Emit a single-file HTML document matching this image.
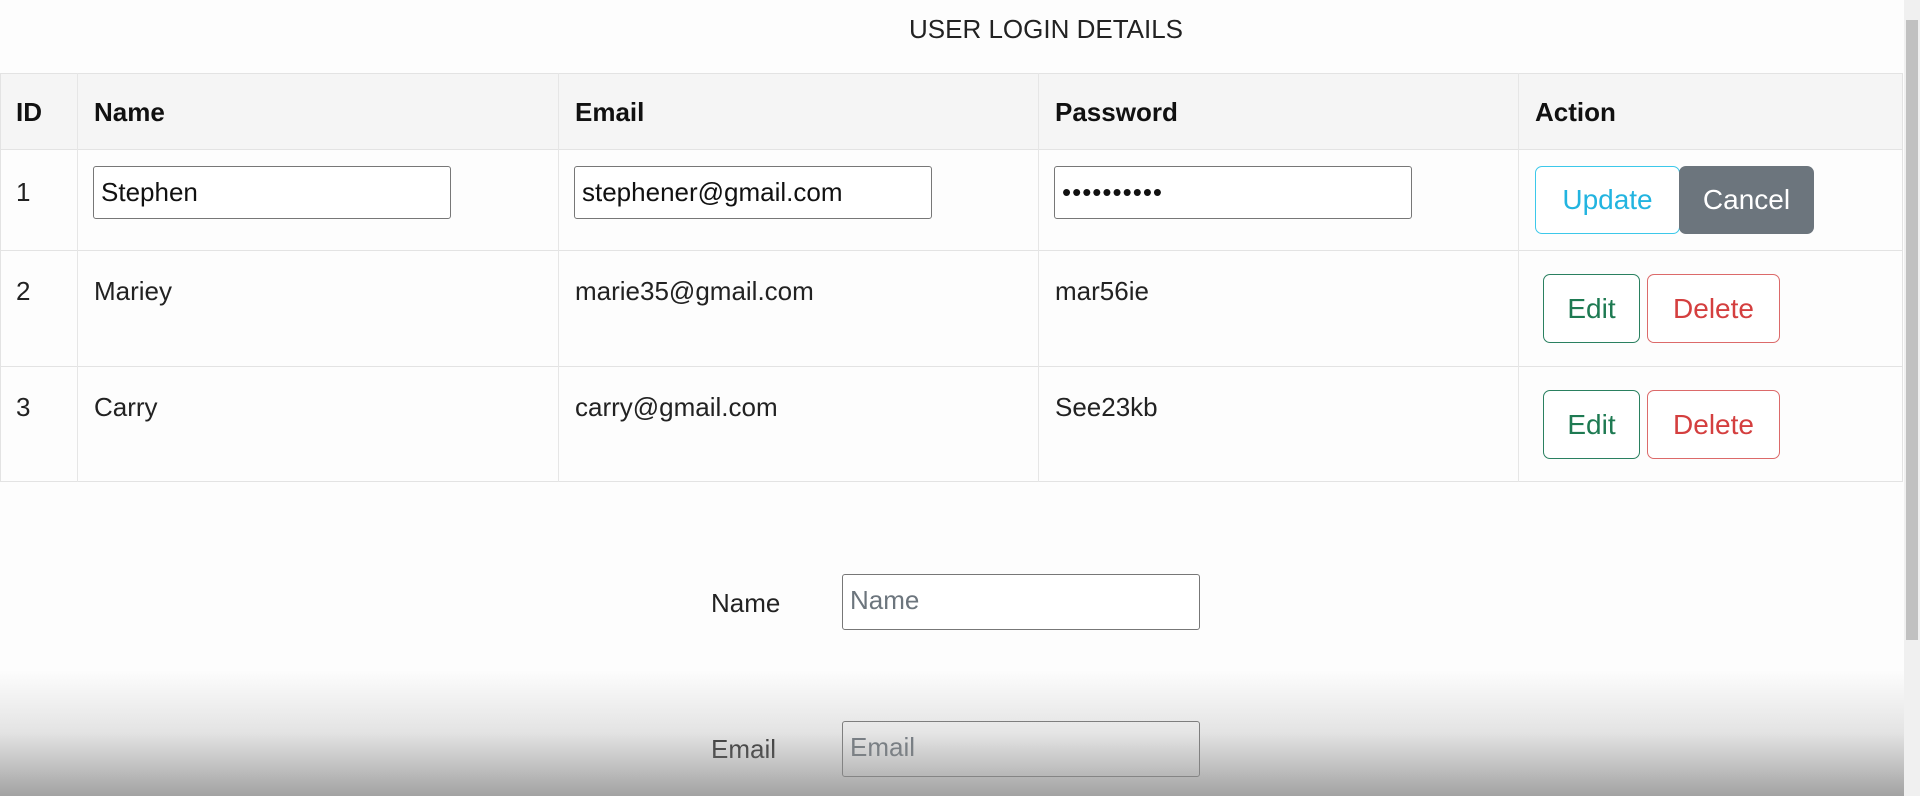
<!DOCTYPE html>
<html><head><style>
body{margin:0;width:1920px;height:796px;overflow:hidden;background:#fdfdfd;font-family:"Liberation Sans",sans-serif;color:#212529;position:relative}
.a{position:absolute}
.title{left:906px;width:280px;top:14px;text-align:center;font-size:26px;color:#222}
.tbl{left:0;top:73px;width:1903px;height:409px;border:1px solid #e3e3e3;box-sizing:border-box}
.hdr{left:0;top:73px;width:1903px;height:76px;background:#f5f5f5}
.hl{height:1px;background:#e3e3e3;left:0;width:1903px}
.vl{width:1px;background:#e6e6e6;top:73px;height:409px}
.th{font-weight:bold;font-size:26px;top:97px;color:#111}
.td{font-size:26px;color:#222}
.inp{border:1px solid #777;border-radius:3px;background:#fff;height:53px;box-sizing:border-box;font-size:26px;padding:10px 7px;color:#111}
.btn{border-radius:7px;box-sizing:border-box;font-size:28px;text-align:center;background:#fff}
.sb{left:1904px;top:0;width:16px;height:796px;background:#f0f0f0}
.sbt{left:1906px;top:20px;width:12px;height:620px;background:#c1c1c1}
.shade{left:0;top:670px;width:1920px;height:126px;background:linear-gradient(to bottom,rgba(150,150,150,0),rgba(150,150,150,.25) 50%,rgba(140,140,140,.8))}
</style></head><body>
<div class="a title">USER LOGIN DETAILS</div>
<div class="a hdr"></div>
<div class="a tbl"></div>
<div class="a hl" style="top:149px"></div>
<div class="a hl" style="top:250px"></div>
<div class="a hl" style="top:366px"></div>
<div class="a vl" style="left:77px"></div>
<div class="a vl" style="left:558px"></div>
<div class="a vl" style="left:1038px"></div>
<div class="a vl" style="left:1518px"></div>
<div class="a th" style="left:16px">ID</div>
<div class="a th" style="left:94px">Name</div>
<div class="a th" style="left:575px">Email</div>
<div class="a th" style="left:1055px">Password</div>
<div class="a th" style="left:1535px">Action</div>
<div class="a td" style="left:16px;top:177px">1</div>
<div class="a inp" style="left:93px;top:166px;width:358px">Stephen</div>
<div class="a inp" style="left:574px;top:166px;width:358px">stephener@gmail.com</div>
<div class="a inp" style="left:1054px;top:166px;width:358px;letter-spacing:1px">••••••••••</div>
<div class="a btn" style="left:1535px;top:166px;width:145px;height:68px;border:1px solid #3cc8ea;color:#22b4e0;line-height:66px">Update</div>
<div class="a btn" style="left:1679px;top:166px;width:135px;height:68px;background:#6c757d;color:#fff;line-height:68px">Cancel</div>
<div class="a td" style="left:16px;top:276px">2</div>
<div class="a td" style="left:94px;top:276px">Mariey</div>
<div class="a td" style="left:575px;top:276px">marie35@gmail.com</div>
<div class="a td" style="left:1055px;top:276px">mar56ie</div>
<div class="a btn" style="left:1543px;top:274px;width:97px;height:69px;border:1px solid #2a8060;color:#1e7a52;line-height:67px">Edit</div>
<div class="a btn" style="left:1647px;top:274px;width:133px;height:69px;border:1px solid #dc6a6a;color:#d43f3f;line-height:67px">Delete</div>
<div class="a td" style="left:16px;top:392px">3</div>
<div class="a td" style="left:94px;top:392px">Carry</div>
<div class="a td" style="left:575px;top:392px">carry@gmail.com</div>
<div class="a td" style="left:1055px;top:392px">See23kb</div>
<div class="a btn" style="left:1543px;top:390px;width:97px;height:69px;border:1px solid #2a8060;color:#1e7a52;line-height:67px">Edit</div>
<div class="a btn" style="left:1647px;top:390px;width:133px;height:69px;border:1px solid #dc6a6a;color:#d43f3f;line-height:67px">Delete</div>
<div class="a td" style="left:711px;top:588px">Name</div>
<div class="a inp" style="left:842px;top:574px;width:358px;height:56px;color:#6c757d">Name</div>
<div class="a td" style="left:711px;top:734px">Email</div>
<div class="a inp" style="left:842px;top:721px;width:358px;height:56px;color:#6c757d">Email</div>
<div class="a shade"></div>
<div class="a sb"></div>
<div class="a sbt"></div>
</body></html>
